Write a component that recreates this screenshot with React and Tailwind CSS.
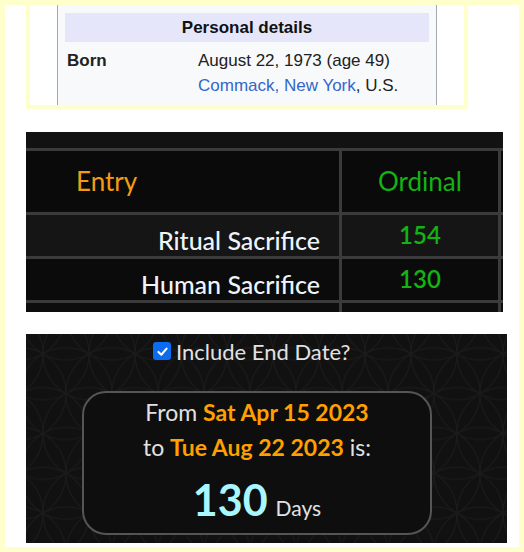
import React from "react";

const LATO = { fontFamily: "Lato, 'Open Sans', sans-serif" };
const ARIAL = { fontFamily: "'Liberation Sans', Arial, sans-serif" };

function FlowerPattern({ id }) {
  const r = 46;
  const h = r * Math.sqrt(3);
  const centers = [];
  for (let row = -2; row <= 4; row++) {
    for (let col = -2; col <= 3; col++) {
      const x = col * r + (row % 2 ? r / 2 : 0);
      const y = (row * h) / 2;
      centers.push([x, y]);
    }
  }
  return (
    <svg className="absolute inset-0 h-full w-full" aria-hidden="true">
      <defs>
        <pattern id={id} width={r} height={h} patternUnits="userSpaceOnUse" x="-6" y="-20">
          {centers.map(([x, y], i) => (
            <circle key={i} cx={x} cy={y} r={r} fill="none" stroke="#1a1a1a" strokeWidth="1.2" />
          ))}
        </pattern>
      </defs>
      <rect width="100%" height="100%" fill={`url(#${id})`} />
    </svg>
  );
}

function WikiInfobox() {
  return (
    <div className="ml-[21px] h-[104px] w-[442px] border-x-4 border-b-4 border-[#ffffcc] bg-white pl-[27px]">
      <div className="h-full w-[380px] border-x border-[#a2a9b1] bg-[#f8f9fa] px-[7px] pt-[8px]" style={ARIAL}>
        <div className="flex h-[29px] items-center justify-center bg-[#e6e6fa] text-[17px] font-bold text-[#111]">
          Personal details
        </div>
        <div className="mt-[6px] flex pl-[2px] text-[17px] leading-[25px] text-[#202122]">
          <div className="w-[131px] font-bold">Born</div>
          <div>
            <div>August 22, 1973 (age 49)</div>
            <div>
              <span className="text-[#3366cc]">Commack, New York</span>, U.S.
            </div>
          </div>
        </div>
      </div>
    </div>
  );
}

function GematriaTable() {
  const rows = [
    { name: "Ritual Sacrifice", value: 154, bg: "bg-[#151515]" },
    { name: "Human Sacrifice", value: 130, bg: "bg-[#0b0b0b]" }
  ];
  return (
    <div className="ml-[21px] mt-[23px] w-[477px]" style={LATO}>
      <div className="h-[16px] bg-[#121212]" />
      <div className="grid grid-cols-[313px_156px_2px] gap-[3px] bg-[#3b3b3b] pt-[3px]">
        <div className="flex h-[61px] items-center bg-[#0a0a0a] pl-[50px] text-[26px] text-[#f39c12]">Entry</div>
        <div className="flex h-[61px] items-center justify-center bg-[#0a0a0a] text-[26px] text-[#13b313]">Ordinal</div>
        <div className="bg-[#0a0a0a]" />
        {rows.map((r) => (
          <React.Fragment key={r.name}>
            <div className={`flex h-[41px] items-end justify-end pb-[3px] pr-[19px] text-[25px] font-medium leading-none text-[#eef4fb] ${r.bg}`}>
              {r.name}
            </div>
            <div className={`flex h-[41px] items-center justify-center pb-[2px] text-[24px] font-semibold text-[#13b313] ${r.bg}`}>
              {r.value}
            </div>
            <div className={r.bg} />
          </React.Fragment>
        ))}
        <div className="h-[9px] bg-[#0d0d0d]" />
        <div className="h-[9px] bg-[#0d0d0d]" />
        <div className="h-[9px] bg-[#0d0d0d]" />
      </div>
    </div>
  );
}

function DateResult() {
  return (
    <div className="relative ml-[21px] mt-[22px] h-[209px] w-[481px] overflow-hidden bg-[#111111]" style={LATO}>
      <FlowerPattern id="flower" />
      <div className="relative flex flex-col">
        <div className="ml-[127px] mt-[8px] flex h-[18px] items-center gap-[5px]">
          <span className="flex h-[18px] w-[18px] items-center justify-center rounded-[3px] bg-[#0b6cf0]">
            <svg viewBox="0 0 16 16" className="h-[13px] w-[13px]">
              <path d="M3 8.5 L6.5 12 L13 4.5" fill="none" stroke="#fff" strokeWidth="2.6" strokeLinecap="round" strokeLinejoin="round" />
            </svg>
          </span>
          <span className="text-[22px] text-[#e2e2e2]">Include End Date?</span>
        </div>
        <div className="ml-[56px] mt-[31px] h-[144px] w-[350px] rounded-[24px] border-2 border-[#555] bg-[#0e0e0e] pt-[2px] text-center">
          <div className="text-[23px] leading-[35px] text-[#e2e2e2]">
            From <span className="font-bold text-[#ff9f00]">Sat Apr 15 2023</span>
          </div>
          <div className="text-[23px] leading-[35px] text-[#e2e2e2]">
            to <span className="font-bold text-[#ff9f00]">Tue Aug 22 2023</span> is:
          </div>
          <div className="mt-[9px] flex items-baseline justify-center gap-[8px]">
            <span className="text-[43px] font-bold leading-[52px] text-[#aaf6ff]">130</span>
            <span className="text-[21px] text-[#e2e2e2]">Days</span>
          </div>
        </div>
      </div>
    </div>
  );
}

export default function App() {
  return (
    <div className="h-[552px] w-[524px] bg-[#ffffcc] p-[5px]">
      <div className="h-full w-full bg-white">
        <WikiInfobox />
        <GematriaTable />
        <DateResult />
      </div>
    </div>
  );
}
